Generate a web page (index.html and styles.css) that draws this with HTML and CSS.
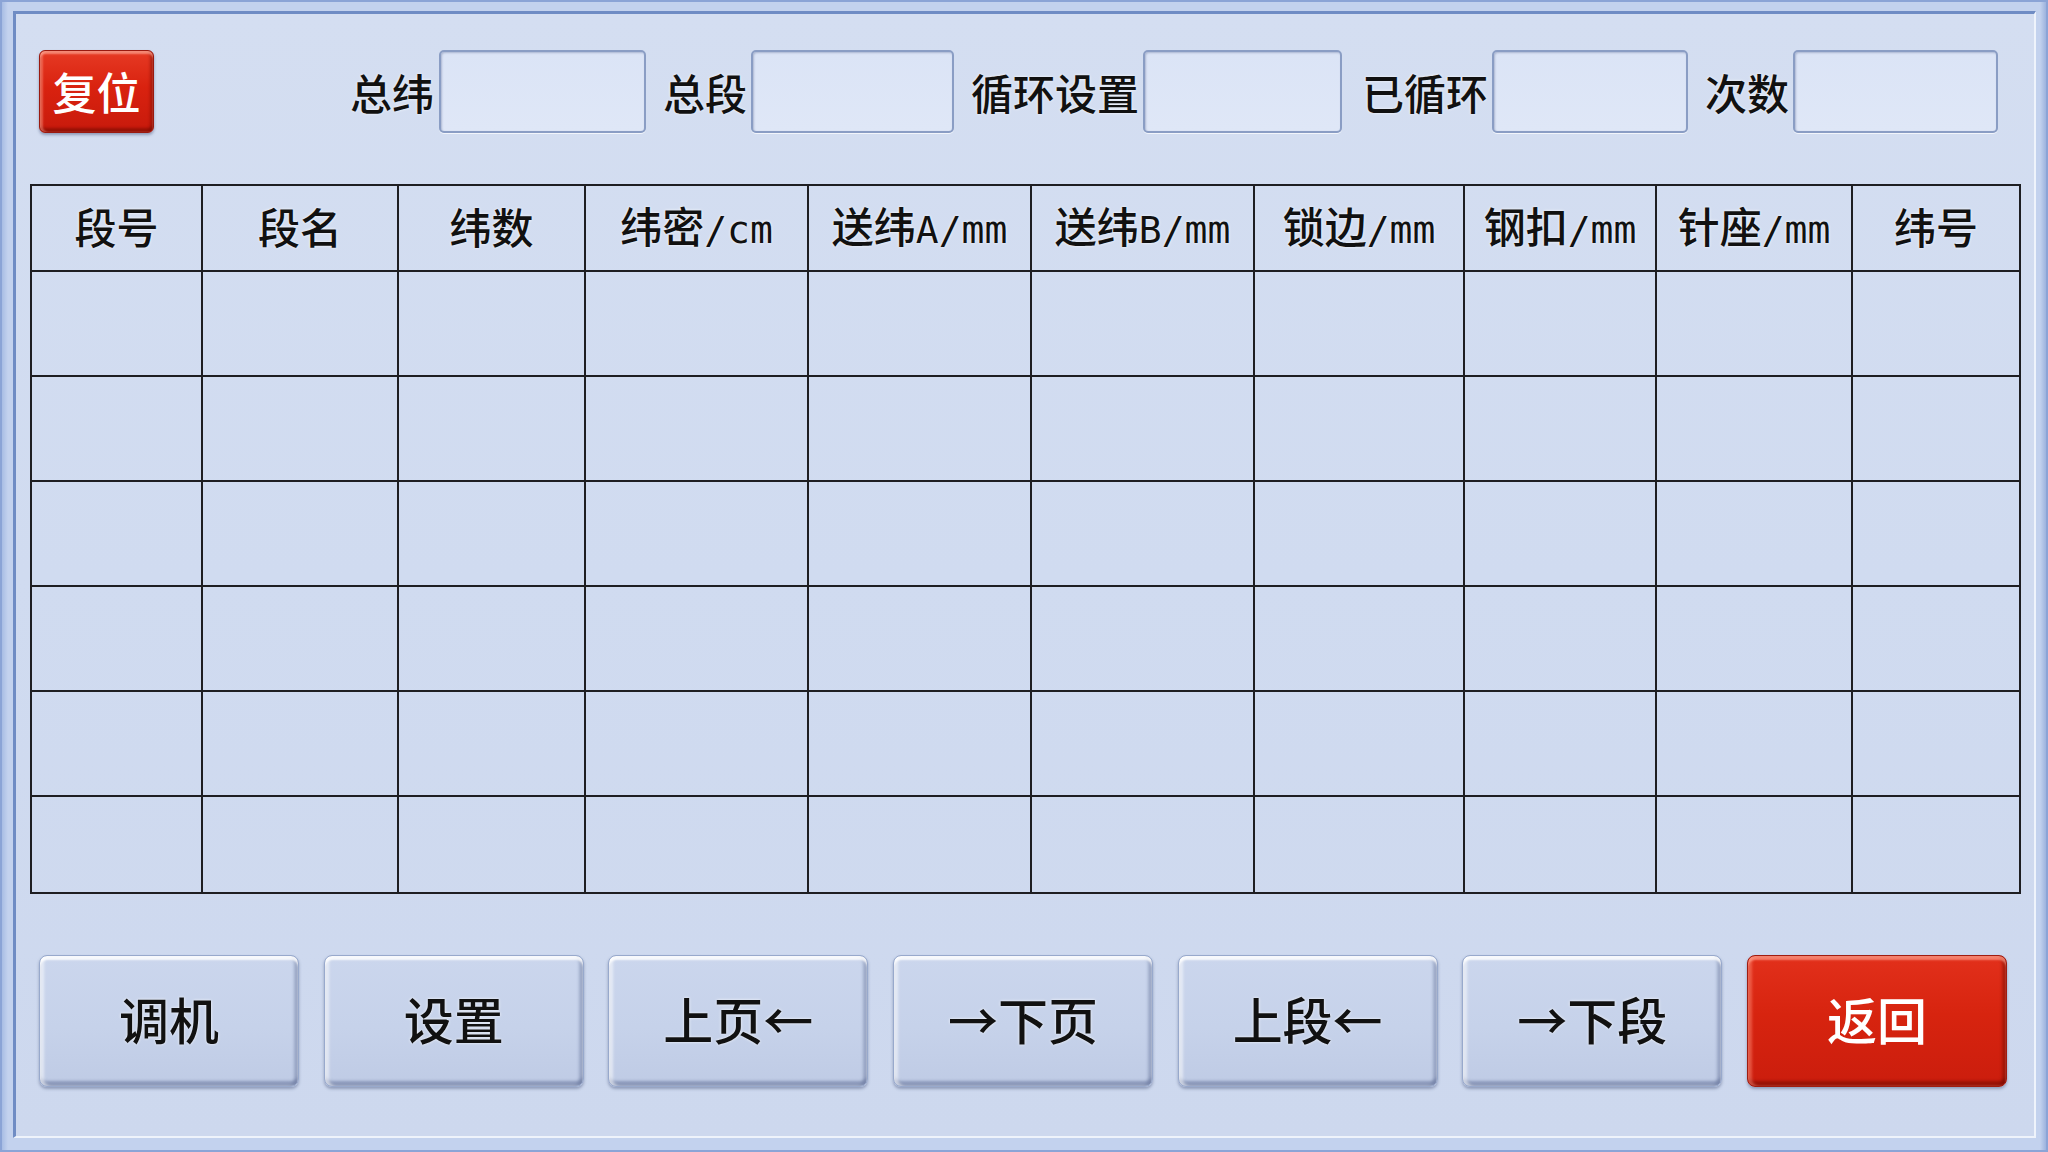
FILE: index.html
```html
<!DOCTYPE html>
<html lang="zh-CN">
<head>
<meta charset="utf-8">
<title>段设置</title>
<link rel="stylesheet" href="styles.css">
</head>
<body>
<div class="frame">
  <div class="panel">
    <div class="toprow">
      <div class="btn-reset">复位</div>
      <span class="lbl l1">总纬</span><div class="field w1"></div>
      <span class="lbl l2">总段</span><div class="field w2"></div>
      <span class="lbl l3">循环设置</span><div class="field w3"></div>
      <span class="lbl l4">已循环</span><div class="field w4"></div>
      <span class="lbl l5">次数</span><div class="field w5"></div>
    </div>
    <table class="grid">
      <colgroup>
        <col class="c1"><col class="c2"><col class="c3"><col class="c4"><col class="c5">
        <col class="c6"><col class="c7"><col class="c8"><col class="c9"><col class="c10">
      </colgroup>
      <thead>
        <tr class="hrow">
          <th>段号</th>
          <th>段名</th>
          <th>纬数</th>
          <th>纬密<span class="lat">/cm</span></th>
          <th>送纬<span class="lat">A/mm</span></th>
          <th>送纬<span class="lat">B/mm</span></th>
          <th>锁边<span class="lat">/mm</span></th>
          <th>钢扣<span class="lat">/mm</span></th>
          <th>针座<span class="lat">/mm</span></th>
          <th>纬号</th>
        </tr>
      </thead>
      <tbody>
        <tr class="drow"><td></td><td></td><td></td><td></td><td></td><td></td><td></td><td></td><td></td><td></td></tr>
        <tr class="drow"><td></td><td></td><td></td><td></td><td></td><td></td><td></td><td></td><td></td><td></td></tr>
        <tr class="drow"><td></td><td></td><td></td><td></td><td></td><td></td><td></td><td></td><td></td><td></td></tr>
        <tr class="drow"><td></td><td></td><td></td><td></td><td></td><td></td><td></td><td></td><td></td><td></td></tr>
        <tr class="drow"><td></td><td></td><td></td><td></td><td></td><td></td><td></td><td></td><td></td><td></td></tr>
        <tr class="drow last"><td></td><td></td><td></td><td></td><td></td><td></td><td></td><td></td><td></td><td></td></tr>
      </tbody>
    </table>
    <div class="btnrow">
      <div class="btn">调机</div>
      <div class="btn">设置</div>
      <div class="btn">上页←</div>
      <div class="btn">→下页</div>
      <div class="btn">上段←</div>
      <div class="btn">→下段</div>
      <div class="btn red">返回</div>
    </div>
  </div>
</div>
</body>
</html>
```

FILE: styles.css
```css
* { box-sizing: border-box; }
html, body {
  margin: 0;
  padding: 0;
  width: 2048px;
  height: 1152px;
  overflow: hidden;
}
body {
  background: #b4c6e7;
  font-family: "Noto Sans CJK SC", "Noto Sans", sans-serif;
  color: #111;
}
.frame {
  width: 2048px;
  height: 1152px;
  padding: 9px 10px 12px 11px;
  border: 2px solid #8ba4d6;
  background: linear-gradient(90deg, #a8bde4 0, #c3d2ee 6px, #c3d2ee calc(100% - 6px), #9db3de 100%);
}
.panel {
  width: 100%;
  height: 100%;
  border-top: 3px solid #6f8cc4;
  border-left: 3px solid #6f8cc4;
  border-right: 2px solid #eef3fb;
  border-bottom: 2px solid #eef3fb;
  background: linear-gradient(180deg, #d4def1 0%, #d0dbf0 50%, #cdd8ee 100%);
  display: flex;
  flex-direction: column;
}

/* top row */
.toprow {
  display: flex;
  align-items: center;
  height: 83px;
  margin-top: 36px;
  margin-left: 23px;
}
.btn-reset {
  width: 115px;
  height: 83px;
  border-radius: 6px;
  background: linear-gradient(180deg, #e63a24 0%, #d9220f 45%, #c81a0c 100%);
  box-shadow:
    inset 0 3px 2px rgba(255, 170, 150, 0.7),
    inset 3px 0 2px rgba(255, 150, 130, 0.5),
    inset 0 -4px 3px rgba(110, 10, 0, 0.55),
    inset -3px 0 3px rgba(120, 10, 0, 0.45),
    0 2px 3px rgba(60, 70, 110, 0.45);
  border: 1px solid #9a1a10;
  color: #fff;
  font-size: 44px;
  font-weight: 500;
  display: flex;
  align-items: center;
  justify-content: center;
  line-height: 1;
  padding-bottom: 2px;
}
.lbl {
  font-size: 42px;
  font-weight: 500;
  line-height: 1;
  white-space: nowrap;
  text-shadow: 0 0 3px rgba(255, 255, 255, 0.9);
}
.l1 { margin-left: 196px; margin-right: 5px; }
.l2 { margin-left: 17px; margin-right: 4px; }
.l3 { margin-left: 17px; margin-right: 4px; }
.l4 { margin-left: 20px; margin-right: 4px; }
.l5 { margin-left: 17px; margin-right: 4px; }
.field {
  height: 83px;
  border: 2px solid #8a9dc4;
  border-radius: 5px;
  background: linear-gradient(180deg, #dbe4f6 0%, #dfe7f7 100%);
  box-shadow:
    inset 1px 1px 2px rgba(80, 95, 140, 0.35),
    0 1px 0 rgba(255, 255, 255, 0.7);
}
.w1 { width: 207px; }
.w2 { width: 203px; }
.w3 { width: 199px; }
.w4 { width: 196px; }
.w5 { width: 205px; }

/* table */
.grid {
  margin-top: 51px;
  margin-left: 14px;
  width: 1989px;
  table-layout: fixed;
  border-collapse: collapse;
}
.grid th, .grid td {
  border: 2px solid #1e1e22;
  padding: 0;
}
.grid th {
  font-size: 42px;
  font-weight: 500;
  text-align: center;
  vertical-align: middle;
  line-height: 1;
  white-space: nowrap;
  text-shadow: 0 0 3px rgba(255, 255, 255, 0.95);
  padding-bottom: 4px;
}
.lat {
  font-family: "DejaVu Sans Mono", "Liberation Mono", monospace;
  font-size: 38px;
  font-weight: normal;
}
.hrow { height: 86px; }
.drow { height: 105px; }
.drow.last { height: 97px; }
.c1 { width: 171px; }
.c2 { width: 196px; }
.c3 { width: 187px; }
.c4 { width: 223px; }
.c5 { width: 223px; }
.c6 { width: 223px; }
.c7 { width: 210px; }
.c8 { width: 192px; }
.c9 { width: 196px; }
.c10 { width: 168px; }

/* bottom buttons */
.btnrow {
  display: flex;
  gap: 24.67px;
  margin-top: 61px;
  margin-left: 23px;
}
.btn {
  width: 260px;
  height: 132px;
  border-radius: 8px;
  border: 1px solid #98a9cc;
  background: linear-gradient(180deg, #cbd6ed 0%, #c6d2ea 55%, #bfcbe5 100%);
  box-shadow:
    inset 0 4px 2px rgba(255, 255, 255, 0.85),
    inset 4px 0 3px rgba(255, 255, 255, 0.55),
    inset 0 -5px 3px rgba(95, 110, 150, 0.55),
    inset -4px 0 3px rgba(95, 110, 150, 0.4),
    0 2px 3px rgba(70, 85, 125, 0.45);
  display: flex;
  align-items: center;
  justify-content: center;
  font-size: 50px;
  font-weight: 500;
  line-height: 1;
  white-space: nowrap;
  text-shadow: 0 0 3px rgba(255, 255, 255, 0.9);
  padding-bottom: 6px;
}
.btn.red {
  border: 1px solid #a01c10;
  background: linear-gradient(180deg, #e2301b 0%, #d7240f 45%, #cb1d0d 100%);
  box-shadow:
    inset 0 4px 2px rgba(255, 160, 140, 0.7),
    inset 4px 0 3px rgba(255, 140, 120, 0.5),
    inset 0 -5px 3px rgba(110, 10, 0, 0.55),
    inset -4px 0 3px rgba(110, 10, 0, 0.45),
    0 2px 3px rgba(70, 85, 125, 0.45);
  color: #fff;
  text-shadow: none;
}
```
